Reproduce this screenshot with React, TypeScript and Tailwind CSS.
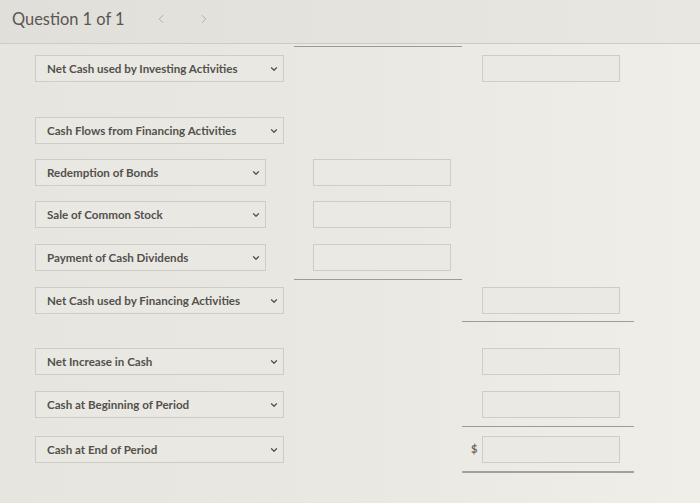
import { ChevronDown, ChevronLeft, ChevronRight } from 'lucide-react';

type Row = {
  label: string;
  wide: boolean;
  mid?: boolean;
  right?: boolean;
  dollar?: boolean;
  mt: string;
};

const ROWS: Row[] = [
  { label: 'Net Cash used by Investing Activities', wide: true, right: true, mt: 'mt-[8px]' },
  { label: 'Cash Flows from Financing Activities', wide: true, mt: 'mt-[35px]' },
  { label: 'Redemption of Bonds', wide: false, mid: true, mt: 'mt-[15px]' },
  { label: 'Sale of Common Stock', wide: false, mid: true, mt: 'mt-[15px]' },
  { label: 'Payment of Cash Dividends', wide: false, mid: true, mt: 'mt-[16px]' },
];

function Select({ label, wide }: { label: string; wide: boolean }) {
  return (
    <div
      className={`flex items-center justify-between h-[27px] ${wide ? 'w-[249px]' : 'w-[231px]'} border border-[#cfccc5] bg-[#eae8e2] pl-[11px] pr-[4px]`}
    >
      <span className="text-[11.6px] font-bold text-[#52514d]">{label}</span>
      <ChevronDown size={10} strokeWidth={3} className="text-[#55534f]" />
    </div>
  );
}

function Box() {
  return <div className="h-[27px] w-[138px] border border-[#cfccc5] bg-[#ebe9e4]" />;
}

function Line({ col, thick }: { col: 'mid' | 'right'; thick?: boolean }) {
  return (
    <div className="flex">
      <div className="w-[294px]" />
      {col === 'mid' ? (
        <div className="w-[168px] border-t border-[#9d9b96]" />
      ) : (
        <>
          <div className="w-[168px]" />
          <div className={`w-[172px] ${thick ? 'border-t-2 border-[#a3a19b]' : 'border-t border-[#9d9b96]'}`} />
        </>
      )}
    </div>
  );
}

function RowView({ row }: { row: Row }) {
  return (
    <div className={`flex items-center h-[27px] ${row.mt}`}>
      <div className="w-[294px] pl-[35px]">
        <Select label={row.label} wide={row.wide} />
      </div>
      <div className="w-[168px] pl-[19px]">{row.mid && <Box />}</div>
      <div className="w-[172px] pl-[20px] relative flex items-center">
        {row.dollar && (
          <span className="absolute left-[9px] text-[11px] font-bold text-[#6a6864]">$</span>
        )}
        {row.right && <Box />}
      </div>
    </div>
  );
}

export default function App() {
  return (
    <div
      className="w-[700px] h-[503px] overflow-hidden bg-linear-to-r from-[#e7e5df] via-[#eae8e2] to-[#efeee9]"
      style={{ fontFamily: 'Lato, "Open Sans", sans-serif' }}
    >
      <div className="h-[44px] flex items-center pb-[5px] border-b border-[#cdcbc5] bg-linear-to-r from-[#e1dfd9] to-[#e8e7e2] pl-[12px]">
        <span className="text-[16.4px] text-[#585754]">Question 1 of 1</span>
        <ChevronLeft size={14} strokeWidth={1.5} className="ml-[29px] text-[#a9a7a2]" />
        <ChevronRight size={14} strokeWidth={1.5} className="ml-[29px] text-[#a9a7a2]" />
      </div>

      <div className="mt-[2px]">
        <Line col="mid" />
      </div>

      {ROWS.map(r => (
        <RowView key={r.label} row={r} />
      ))}

      <div className="mt-[8px]">
        <Line col="mid" />
      </div>
      <RowView row={{ label: 'Net Cash used by Financing Activities', wide: true, right: true, mt: 'mt-[7px]' }} />
      <div className="mt-[7px]">
        <Line col="right" />
      </div>
      <RowView row={{ label: 'Net Increase in Cash', wide: true, right: true, mt: 'mt-[26px]' }} />
      <RowView row={{ label: 'Cash at Beginning of Period', wide: true, right: true, mt: 'mt-[16px]' }} />
      <div className="mt-[8px]">
        <Line col="right" />
      </div>
      <RowView row={{ label: 'Cash at End of Period', wide: true, right: true, dollar: true, mt: 'mt-[9px]' }} />
      <div className="mt-[8px]">
        <Line col="right" thick />
      </div>
    </div>
  );
}
